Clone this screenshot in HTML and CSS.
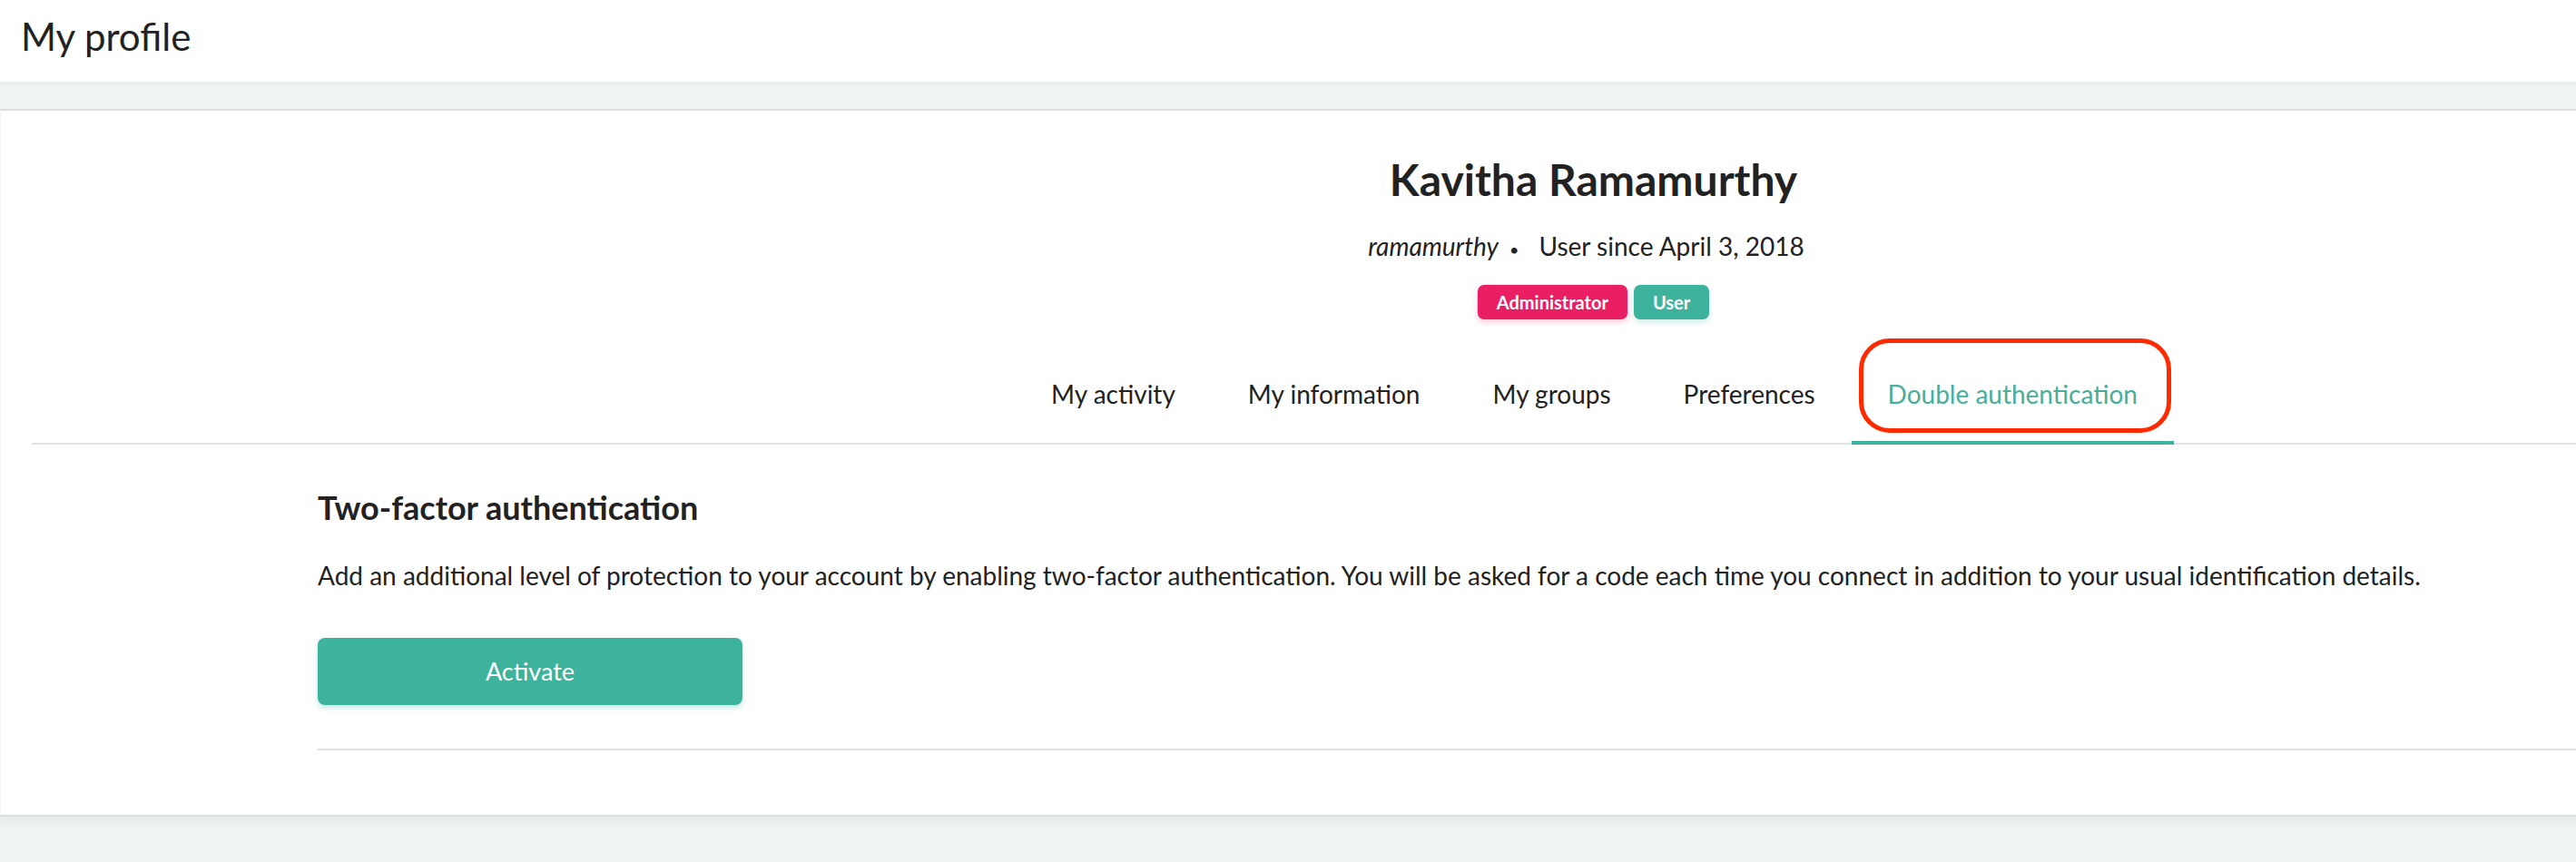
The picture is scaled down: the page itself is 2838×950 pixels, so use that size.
FILE: index.html
```html
<!DOCTYPE html>
<html lang="en">
<head>
    <meta charset="UTF-8">
    <meta name="viewport" content="width=device-width, initial-scale=1.0">
    <title>My profile</title>
    <link rel="stylesheet" href="styles.css">
</head>
<body>
    <!-- barre du haut -->
    <header class="topbar">
        <h1 class="page-title">My profile</h1>
    </header>
    <div class="band"></div>

    <div class="card">
        <div class="profile-head">
            <h2 class="profile-name">Kavitha Ramamurthy</h2>
            <p class="profile-meta">
                <span class="login">ramamurthy</span>
                <span class="dot">&bull;</span>
                <span>User since April 3, 2018</span>
            </p>
            <div class="badges">
                <span class="badge badge-admin">Administrator</span>
                <span class="badge badge-user">User</span>
            </div>
        </div>

        <!-- onglets -->
        <nav class="tabs">
            <a class="tab">My activity</a>
            <a class="tab">My information</a>
            <a class="tab">My groups</a>
            <a class="tab">Preferences</a>
            <a class="tab active">Double authentication<span class="mark"></span></a>
        </nav>

        <section class="section">
            <h3 class="section-title">Two-factor authentication</h3>
            <p class="section-text">Add an additional level of protection to your account by enabling two-factor authentication. You will be asked for a code each time you connect in addition to your usual identification details.</p>
            <button class="btn">Activate</button>
            <div class="section-end"></div>
        </section>
    </div>
    <div class="band band-bottom"></div>
</body>
</html>
```

FILE: styles.css
```css
body {
    margin: 0;
    background-color: #eef5f2;
    font-family: Lato, "Open Sans", sans-serif;
    color: #222;
}

.topbar {
    height: 90px;
    background-color: #fff;
    padding-left: 23px;
    box-sizing: border-box;
}

.page-title {
    margin: 0;
    font-size: 42px;
    font-weight: 400;
    line-height: 1.2;
    padding-top: 15px;
}

.band {
    height: 30px;
    background: linear-gradient(#e6ecea, #eef5f2 8px);
}

.band-bottom {
    height: 49px;
    background: linear-gradient(#e6ecea, #eef5f2 16px);
}

.card {
    background-color: #fff;
    border-top: 2px solid #d7dedd;
    border-bottom: 2px solid #d7dedd;
    border-left: 1px solid #f4f4f4;
    padding-bottom: 71px;
}

/* en-tete du profil, centre sur la zone de droite */
.profile-head {
    padding: 47px 0 0 672px;
    text-align: center;
}

.profile-name {
    margin: 0;
    font-size: 48px;
    font-weight: 700;
    line-height: 1.2;
}

.profile-meta {
    margin: 28px 0 0;
    padding-right: 16px;
    display: flex;
    justify-content: center;
    align-items: baseline;
    font-size: 28px;
    line-height: 1.2;
}

.login {
    font-style: italic;
}

.dot {
    margin: 0 22px 0 12px;
    font-size: 18px;
}

.badges {
    margin-top: 26px;
    display: flex;
    justify-content: center;
    gap: 7px;
}

.badge {
    height: 38px;
    line-height: 38px;
    padding: 0 21px;
    border-radius: 7px;
    color: #fff;
    font-size: 20px;
    font-weight: 700;
}

.badge-admin {
    background-color: #e91e63;
    box-shadow: 0 3px 6px rgba(233, 30, 99, 0.25);
}

.badge-user {
    background-color: #3db39e;
    box-shadow: 0 3px 6px rgba(61, 179, 158, 0.25);
}

.tabs {
    margin: 36px 0 0 34px;
    padding-left: 640px;
    display: flex;
    justify-content: center;
    border-bottom: 2px solid #e2e2e2;
}

.tab {
    position: relative;
    padding: 30px 40px 34px;
    margin-bottom: -2px;
    border-bottom: 4px solid transparent;
    font-size: 28px;
    line-height: 1.2;
    color: #222;
    cursor: pointer;
}

.tab.active {
    color: #46ae99;
    border-bottom-color: #3db39e;
}

/* entourage rouge d'annotation */
.mark {
    position: absolute;
    left: 8px;
    top: -15px;
    width: 344px;
    height: 104px;
    box-sizing: border-box;
    border: 5px solid #ff2a00;
    border-radius: 34px;
}

.section {
    margin-left: 349px;
    padding-top: 48px;
}

.section-title {
    margin: 0;
    font-size: 36px;
    font-weight: 700;
    line-height: 1.2;
}

.section-text {
    margin: 37px 0 0;
    font-size: 28px;
    line-height: 1.2;
}

.btn {
    display: block;
    margin-top: 51px;
    width: 468px;
    height: 74px;
    border: none;
    border-radius: 8px;
    background-color: #3db39e;
    color: #fff;
    font-family: inherit;
    font-size: 27px;
    box-shadow: 0 3px 6px rgba(61, 179, 158, 0.3);
    cursor: pointer;
}

.section-end {
    margin-top: 48px;
    border-top: 2px solid #e2e2e2;
}
```
